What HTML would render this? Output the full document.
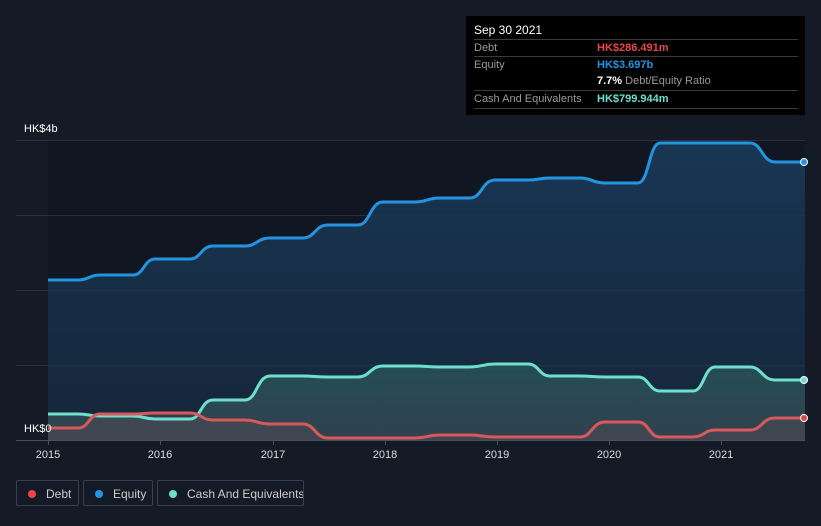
<!DOCTYPE html><html><head><style>
body{margin:0;width:821px;height:526px;background:#151b26;font-family:"Liberation Sans",sans-serif;overflow:hidden;position:relative}
.tt{position:absolute;left:466px;top:16px;width:339px;height:99px;background:#000;color:#fff;font-size:11px}
.row{position:absolute;left:8px;width:324px;border-top:1px solid #3a3a3a;height:17px;line-height:17px}
.lab{color:#999;position:absolute;left:0}
.val{position:absolute;left:123px;font-weight:bold}
.leg{position:absolute;top:480px;height:26px;border:1px solid #3a404c;border-radius:2px;color:#ccc;font-size:12px;line-height:26px;box-sizing:border-box;white-space:nowrap;overflow:hidden}
.dot{display:inline-block;width:8px;height:8px;border-radius:50%;margin:0 10px 0 11px;vertical-align:0}
</style></head><body>
<svg width="821" height="526" style="position:absolute;left:0;top:0">
<defs>
<linearGradient id="ge" x1="0" y1="0" x2="0" y2="1"><stop offset="0" stop-color="#1a3a5a" stop-opacity=".9"/><stop offset="1" stop-color="#18304a" stop-opacity=".6"/></linearGradient>
<linearGradient id="gc" x1="0" y1="0" x2="0" y2="1"><stop offset="0" stop-color="#2a5a5a"/><stop offset="1" stop-color="#3a4a55"/></linearGradient>
</defs>
<rect x="48" y="140" width="757" height="300" fill="#111722"/>
<g stroke="#2a303b" stroke-width="1">
<line x1="16" y1="140.5" x2="805" y2="140.5"/><line x1="16" y1="215.5" x2="805" y2="215.5"/><line x1="16" y1="290.5" x2="805" y2="290.5"/><line x1="16" y1="365.5" x2="805" y2="365.5"/>
</g>
<path d="M48,280 L78,280 C89,280 89,275 100,275 L133,275 C144,275 144,259 155,259 L190,259 C201,259 201,246 213,246 L245,246 C257,246 257,238 270,238 L303,238 C315,238 315,225 328,225 L358,225 C370,225 370,202 383,202 L415,202 C427,202 427,198 440,198 L470,198 C482,198 482,180 495,180 L528,180 C539,180 539,178 550,178 L580,178 C592,178 592,183 605,183 L638,183 C649,183 649,143 660,143 L750,143 C762,143 762,162 775,162 L805,162 L805,440 L48,440Z" fill="url(#ge)"/>
<path d="M48,414 L78,414 C89,414 89,416 100,416 L133,416 C144,416 144,419 155,419 L190,419 C201,419 201,400 213,400 L245,400 C257,400 257,376 270,376 L303,376 C315,376 315,377 328,377 L358,377 C370,377 370,366 383,366 L415,366 C427,366 427,367 440,367 L470,367 C482,367 482,364 495,364 L528,364 C539,364 539,376 550,376 L580,376 C592,376 592,377 605,377 L638,377 C649,377 649,391 660,391 L693,391 C704,391 704,367 715,367 L750,367 C762,367 762,380 775,380 L805,380 L805,440 L48,440Z" fill="url(#gc)" opacity=".75"/>
<path d="M48,428 L78,428 C89,428 89,414 100,414 L133,414 C144,414 144,413 155,413 L190,413 C201,413 201,420 213,420 L245,420 C257,420 257,424 270,424 L303,424 C315,424 315,438 328,438 L415,438 C427,438 427,435 440,435 L470,435 C482,435 482,437 495,437 L580,437 C592,437 592,422 605,422 L638,422 C649,422 649,437 660,437 L693,437 C704,437 704,430 715,430 L750,430 C762,430 762,418 775,418 L805,418 L805,440 L48,440Z" fill="#4a4a55" opacity=".6"/>
<path d="M48,280 L78,280 C89,280 89,275 100,275 L133,275 C144,275 144,259 155,259 L190,259 C201,259 201,246 213,246 L245,246 C257,246 257,238 270,238 L303,238 C315,238 315,225 328,225 L358,225 C370,225 370,202 383,202 L415,202 C427,202 427,198 440,198 L470,198 C482,198 482,180 495,180 L528,180 C539,180 539,178 550,178 L580,178 C592,178 592,183 605,183 L638,183 C649,183 649,143 660,143 L750,143 C762,143 762,162 775,162 L805,162" fill="none" stroke="#2394df" stroke-width="3"/>
<path d="M48,414 L78,414 C89,414 89,416 100,416 L133,416 C144,416 144,419 155,419 L190,419 C201,419 201,400 213,400 L245,400 C257,400 257,376 270,376 L303,376 C315,376 315,377 328,377 L358,377 C370,377 370,366 383,366 L415,366 C427,366 427,367 440,367 L470,367 C482,367 482,364 495,364 L528,364 C539,364 539,376 550,376 L580,376 C592,376 592,377 605,377 L638,377 C649,377 649,391 660,391 L693,391 C704,391 704,367 715,367 L750,367 C762,367 762,380 775,380 L805,380" fill="none" stroke="#6ce0cc" stroke-width="3"/>
<path d="M48,428 L78,428 C89,428 89,414 100,414 L133,414 C144,414 144,413 155,413 L190,413 C201,413 201,420 213,420 L245,420 C257,420 257,424 270,424 L303,424 C315,424 315,438 328,438 L415,438 C427,438 427,435 440,435 L470,435 C482,435 482,437 495,437 L580,437 C592,437 592,422 605,422 L638,422 C649,422 649,437 660,437 L693,437 C704,437 704,430 715,430 L750,430 C762,430 762,418 775,418 L805,418" fill="none" stroke="#d9585c" stroke-width="3"/>
<line x1="16" y1="440.5" x2="805" y2="440.5" stroke="#4a505a"/>
<g stroke="#4a505a"><line x1="48.5" y1="440" x2="48.5" y2="445"/><line x1="160.5" y1="440" x2="160.5" y2="445"/><line x1="273.5" y1="440" x2="273.5" y2="445"/><line x1="385.5" y1="440" x2="385.5" y2="445"/><line x1="497.5" y1="440" x2="497.5" y2="445"/><line x1="609.5" y1="440" x2="609.5" y2="445"/><line x1="721.5" y1="440" x2="721.5" y2="445"/></g>
<circle cx="804" cy="162" r="3.5" fill="#2394df" stroke="#fff" stroke-width="1"/>
<circle cx="804" cy="380" r="3.5" fill="#6ce0cc" stroke="#fff" stroke-width="1"/>
<circle cx="804" cy="418" r="3.5" fill="#e0454a" stroke="#fff" stroke-width="1"/>
<g fill="#fff" font-size="11" font-family="Liberation Sans"><text x="24" y="132">HK$4b</text><text x="24" y="432">HK$0</text></g>
<g fill="#ddd" font-size="11" font-family="Liberation Sans" text-anchor="middle"><text x="48" y="458">2015</text><text x="160" y="458">2016</text><text x="273" y="458">2017</text><text x="385" y="458">2018</text><text x="497" y="458">2019</text><text x="609" y="458">2020</text><text x="721" y="458">2021</text></g>
</svg>
<div class="tt">
<div style="position:absolute;left:8px;top:7px;font-size:12px">Sep 30 2021</div>
<div class="row" style="top:23px"><span class="lab">Debt</span><span class="val" style="color:#e8474a">HK$286.491m</span></div>
<div class="row" style="top:40px"><span class="lab">Equity</span><span class="val" style="color:#2394df">HK$3.697b</span></div>
<div class="row" style="top:57px;border:none"><span class="val">7.7% <span style="color:#999;font-weight:normal">Debt/Equity Ratio</span></span></div>
<div class="row" style="top:74px;border-bottom:1px solid #3a3a3a"><span class="lab">Cash And Equivalents</span><span class="val" style="color:#6ce0cc">HK$799.944m</span></div>
</div>
<div class="leg" style="left:16px;width:63px"><span class="dot" style="background:#e8474a"></span>Debt</div>
<div class="leg" style="left:83px;width:70px"><span class="dot" style="background:#2394df"></span>Equity</div>
<div class="leg" style="left:157px;width:147px"><span class="dot" style="background:#6ce0cc"></span>Cash And Equivalents</div>
</body></html>
